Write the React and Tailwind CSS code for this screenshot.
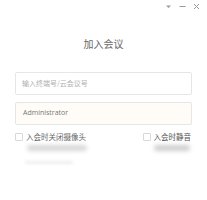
import React from "react";

const font = { fontFamily: '"Noto Sans CJK SC", "Noto Sans", sans-serif' };

const App = () => {
  return (
    <div className="w-[207px] h-[200px] bg-white relative overflow-hidden" style={font}>
      {/* window controls */}
      <div className="absolute top-[3px] right-[7px] flex items-center gap-[7px] text-[#9a9a9a]">
        <svg width="7" height="7" viewBox="0 0 7 7"><path d="M1 2.5h5L3.5 5z" fill="#9a9a9a" /></svg>
        <svg width="7" height="7" viewBox="0 0 7 7"><path d="M0.5 3.5h6" stroke="#9a9a9a" strokeWidth="1" /></svg>
        <svg width="7" height="7" viewBox="0 0 7 7"><path d="M1 1l5 5M6 1L1 6" stroke="#9a9a9a" strokeWidth="1" /></svg>
      </div>

      <div className="flex flex-col pt-[37px] px-[15px]">
        <div className="text-center text-[10px] leading-[14px] text-[#666]">加入会议</div>

        <div className="mt-[21px] h-[23px] border border-[#e6e6e6] rounded-[2px] flex items-center px-[6px]">
          <span className="text-[7px] text-[#b0b0b0]">输入终端号/云会议号</span>
        </div>

        <div className="mt-[7px] h-[23px] border border-[#e6e6e6] rounded-[2px] bg-[#fffcf8] flex items-center px-[7px]">
          <span className="text-[7px] text-[#777]" style={{ fontFamily: '"Open Sans", "Noto Sans", sans-serif' }}>Administrator</span>
        </div>

        <div className="mt-[7px] flex items-center justify-between">
          <div className="flex items-center gap-[3px]">
            <span className="w-[8px] h-[8px] border border-[#d8d8d8] rounded-[1px] bg-white" />
            <span className="text-[7.5px] leading-[9px] text-[#666]">入会时关闭摄像头</span>
          </div>
          <div className="flex items-center gap-[3px] mr-[1px]">
            <span className="w-[8px] h-[8px] border border-[#d8d8d8] rounded-[1px] bg-white" />
            <span className="text-[7.5px] leading-[9px] text-[#555]">入会时静音</span>
          </div>
        </div>

        <div className="mt-[4px] flex justify-between pl-[12px]">
          <div className="w-[60px] h-[6px] bg-[#d8d8d8] rounded-full blur-[2px]" />
          <div className="w-[36px] h-[6px] bg-[#cfcfcf] rounded-full blur-[2px] mr-[2px]" />
        </div>

        <div className="mt-[10px] ml-[10px] w-[48px] h-[3px] bg-[#eeeeee] rounded-full blur-[1.5px]" />
      </div>
    </div>
  );
};

export default App;
